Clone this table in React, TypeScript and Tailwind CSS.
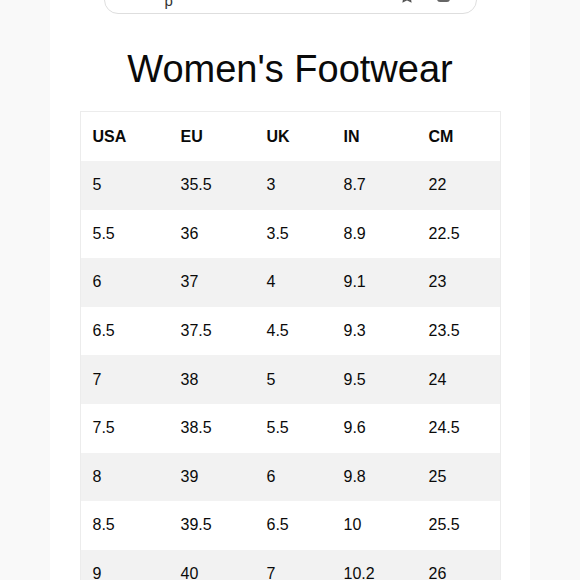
import React from 'react';

const rows = [
  ['5', '35.5', '3', '8.7', '22'],
  ['5.5', '36', '3.5', '8.9', '22.5'],
  ['6', '37', '4', '9.1', '23'],
  ['6.5', '37.5', '4.5', '9.3', '23.5'],
  ['7', '38', '5', '9.5', '24'],
  ['7.5', '38.5', '5.5', '9.6', '24.5'],
  ['8', '39', '6', '9.8', '25'],
  ['8.5', '39.5', '6.5', '10', '25.5'],
  ['9', '40', '7', '10.2', '26'],
];

const cols = 'grid grid-cols-[88px_86px_77px_85px_1fr] items-center pl-3';

const App: React.FC = () => {
  return (
    <div className="h-[580px] overflow-hidden bg-[#f9f9f9] font-['Liberation_Sans',Arial,sans-serif] text-[#0a0a0a]">
      <div className="mx-auto flex h-full w-[480px] flex-col bg-white">
        {/* Search bar, mostly scrolled off the top */}
        <div className="mx-auto -mt-[26px] flex h-[40px] w-[373px] shrink-0 items-center rounded-[14px] border border-[#dedede] bg-white px-4">
          <span className="ml-[44px] mt-[14px] text-[15px] text-[#333]">p</span>
          <div className="flex-1" />
          <svg width="16" height="16" viewBox="0 0 24 24" className="mr-[22px] mt-[4px]" fill="none" stroke="#555" strokeWidth="2">
            <path d="M12 3l2.8 5.7 6.2.9-4.5 4.4 1.1 6.2L12 17.3 6.4 20.2l1.1-6.2L3 9.6l6.2-.9z" />
          </svg>
          <div className="mr-[10px] mt-[2px] h-[14px] w-[13px] rounded-[3px] bg-[#666]" />
        </div>

        <h1 className="mt-[32px] text-center text-[38px] leading-[46px] font-normal">Women's Footwear</h1>

        <div className="mx-auto mt-[19px] w-[421px] border border-b-0 border-[#ececec] text-[16px]">
          <div className={`${cols} h-[49px] bg-white font-bold`}>
            <span>USA</span>
            <span>EU</span>
            <span>UK</span>
            <span>IN</span>
            <span>CM</span>
          </div>
          {rows.map((r, i) => (
            <div key={i} className={`${cols} h-[48.6px] ${i % 2 === 0 ? 'bg-[#f2f2f2]' : 'bg-white'}`}>
              {r.map((c, j) => (
                <span key={j}>{c}</span>
              ))}
            </div>
          ))}
        </div>
      </div>
    </div>
  );
};

export default App;
